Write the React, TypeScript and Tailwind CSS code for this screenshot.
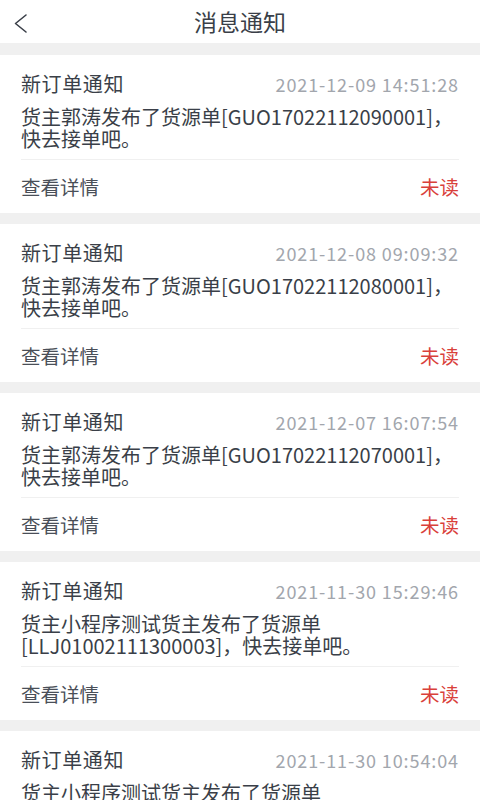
import React from "react";

type Msg = { date: string; body: string };

const msgs: Msg[] = [
  { date: "2021-12-09 14:51:28", body: "货主郭涛发布了货源单[GUO17022112090001]，快去接单吧。" },
  { date: "2021-12-08 09:09:32", body: "货主郭涛发布了货源单[GUO17022112080001]，快去接单吧。" },
  { date: "2021-12-07 16:07:54", body: "货主郭涛发布了货源单[GUO17022112070001]，快去接单吧。" },
  { date: "2021-11-30 15:29:46", body: "货主小程序测试货主发布了货源单[LLJ01002111300003]，快去接单吧。" },
  { date: "2021-11-30 10:54:04", body: "货主小程序测试货主发布了货源单[LLJ01002111300002]，快去接单吧。" },
];

function Card({ m }: { m: Msg }) {
  return (
    <div className="bg-white px-[21px] pt-[15px]">
      <div className="flex items-center justify-between h-[28px]">
        <span className="text-[20px] tracking-[0.6px] text-[#3a3f48]">新订单通知</span>
        <span className="text-[18px] tracking-[0.9px] text-[#a2a6ad]">{m.date}</span>
      </div>
      <div className="mt-[8px] text-[20px] leading-[22px] text-[#3a3f48] break-normal">
        {m.body}
      </div>
      <div className="mt-[9px] h-px bg-[#f0f0f0]" />
      <div className="flex items-center justify-between h-[53px]">
        <span className="text-[19.5px] text-[#4a4f58]">查看详情</span>
        <span className="text-[19.5px] text-[#d9403a]">未读</span>
      </div>
    </div>
  );
}

export default function App() {
  return (
    <div
      className="w-[480px] h-[800px] overflow-hidden bg-[#f0f0f0]"
      style={{ fontFamily: '"Noto Sans CJK SC", "Noto Sans", sans-serif' }}
    >
      <div className="relative h-[43px] bg-white flex items-center justify-center">
        <svg
          className="absolute left-[13px] top-[13px]"
          width="16"
          height="22"
          viewBox="0 0 16 22"
          fill="none"
        >
          <path d="M13 2 L2.5 10.5 L13 19" stroke="#3a3f48" strokeWidth="1.6" strokeLinecap="round" strokeLinejoin="round" />
        </svg>
        <span className="text-[23px] text-[#3a3f48]">消息通知</span>
      </div>
      <div className="flex flex-col gap-[11px] pt-[12px]">
        {msgs.map((m, i) => (
          <Card key={i} m={m} />
        ))}
      </div>
    </div>
  );
}
